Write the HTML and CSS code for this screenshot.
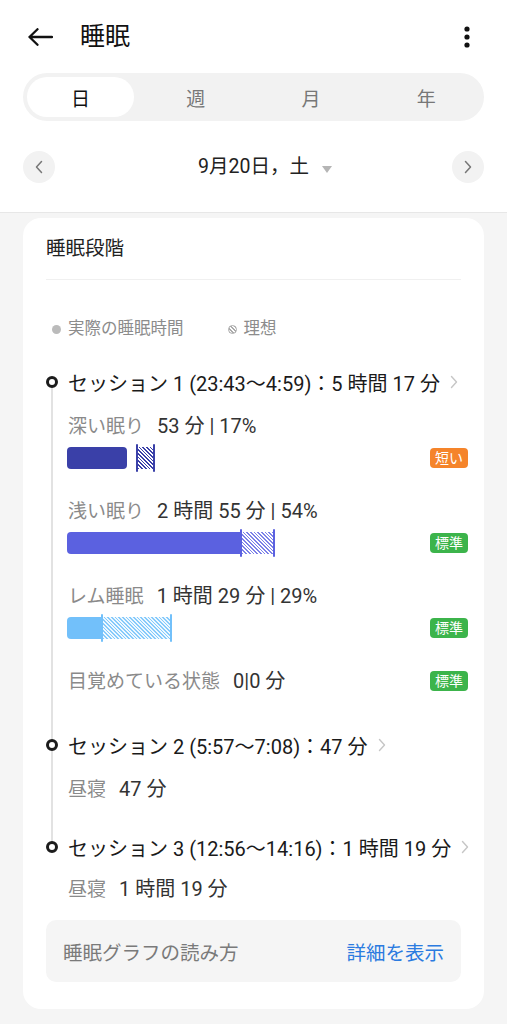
FILE: index.html
```html
<!DOCTYPE html>
<html lang="ja">
<head>
<meta charset="utf-8">
<title>睡眠</title>
<link rel="stylesheet" href="styles.css">
</head>
<body>
<div class="app">
  <header class="top">
    <div class="appbar">
      <svg class="back" width="26" height="18" viewBox="0 0 26 18"><path d="M25 9H2.5M10.5 1.2L2.5 9l8 7.8" fill="none" stroke="#111" stroke-width="2.3" stroke-linecap="round" stroke-linejoin="round"/></svg>
      <h1 class="title">睡眠</h1>
      <svg class="more" width="6" height="22" viewBox="0 0 6 22"><circle cx="3" cy="3" r="2.6" fill="#111"/><circle cx="3" cy="11" r="2.6" fill="#111"/><circle cx="3" cy="19" r="2.6" fill="#111"/></svg>
    </div>
    <div class="seg">
      <div class="seg-item active">日</div>
      <div class="seg-item">週</div>
      <div class="seg-item">月</div>
      <div class="seg-item">年</div>
    </div>
    <div class="datebar">
      <div class="nav"><svg width="8" height="14" viewBox="0 0 8 14"><path d="M6.5 1.5L1.5 7l5 5.5" fill="none" stroke="#777" stroke-width="1.5" stroke-linecap="round" stroke-linejoin="round"/></svg></div>
      <div class="date"><span class="date-text">9月20日，土</span></div>
      <div class="nav"><svg width="8" height="14" viewBox="0 0 8 14"><path d="M1.5 1.5L6.5 7l-5 5.5" fill="none" stroke="#777" stroke-width="1.5" stroke-linecap="round" stroke-linejoin="round"/></svg></div>
    </div>
  </header>

  <main class="content">
    <section class="card">
      <h2 class="card-title">睡眠段階</h2>
      <div class="sep"></div>
      <div class="legend">
        <span class="ldot solid"></span><span class="ltext">実際の睡眠時間</span>
        <span class="ldot hatch"></span><span class="ltext">理想</span>
      </div>

      <div class="timeline">
        <div class="session first">
          <div class="rail"><span class="marker"></span></div>
          <div class="sbody">
            <div class="shead"><span class="stitle">セッション 1 (23:43〜4:59)：5 時間 17 分</span><svg class="chev" width="8" height="14" viewBox="0 0 8 14"><path d="M1.5 1.5L6.5 7l-5 5.5" fill="none" stroke="#c6c6c6" stroke-width="1.4" stroke-linecap="round" stroke-linejoin="round"/></svg></div>

            <div class="stage">
              <div class="slabel"><span class="sname">深い眠り</span><span class="sval">53 分 | 17%</span></div>
              <div class="barrow">
                <div class="bar deep">
                  <span class="solid full" style="width:60px"></span>
                  <span class="gapper" style="width:9px"></span>
                  <span class="tick"></span><span class="hatch" style="width:15px"></span><span class="tick"></span>
                </div>
                <span class="badge short">短い</span>
              </div>
            </div>

            <div class="stage">
              <div class="slabel"><span class="sname">浅い眠り</span><span class="sval">2 時間 55 分 | 54%</span></div>
              <div class="barrow">
                <div class="bar light">
                  <span class="solid" style="width:173px"></span>
                  <span class="tick"></span><span class="hatch" style="width:31px"></span><span class="tick"></span>
                </div>
                <span class="badge ok">標準</span>
              </div>
            </div>

            <div class="stage">
              <div class="slabel"><span class="sname">レム睡眠</span><span class="sval">1 時間 29 分 | 29%</span></div>
              <div class="barrow">
                <div class="bar rem">
                  <span class="solid" style="width:34px"></span>
                  <span class="tick"></span><span class="hatch" style="width:67px"></span><span class="tick"></span>
                </div>
                <span class="badge ok">標準</span>
              </div>
            </div>

            <div class="stage awake">
              <div class="slabel"><span class="sname">目覚めている状態</span><span class="sval">0|0 分</span></div>
              <span class="badge ok">標準</span>
            </div>
          </div>
        </div>

        <div class="session mid">
          <div class="rail"><span class="marker"></span></div>
          <div class="sbody">
            <div class="shead"><span class="stitle">セッション 2 (5:57〜7:08)：47 分</span><svg class="chev" width="8" height="14" viewBox="0 0 8 14"><path d="M1.5 1.5L6.5 7l-5 5.5" fill="none" stroke="#c6c6c6" stroke-width="1.4" stroke-linecap="round" stroke-linejoin="round"/></svg></div>
            <div class="nap"><span class="sname">昼寝</span><span class="sval">47 分</span></div>
          </div>
        </div>

        <div class="session last">
          <div class="rail"><span class="marker"></span></div>
          <div class="sbody">
            <div class="shead"><span class="stitle">セッション 3 (12:56〜14:16)：1 時間 19 分</span><svg class="chev" width="8" height="14" viewBox="0 0 8 14"><path d="M1.5 1.5L6.5 7l-5 5.5" fill="none" stroke="#c6c6c6" stroke-width="1.4" stroke-linecap="round" stroke-linejoin="round"/></svg></div>
            <div class="nap"><span class="sname">昼寝</span><span class="sval">1 時間 19 分</span></div>
          </div>
        </div>
      </div>

      <div class="info">
        <span class="info-text">睡眠グラフの読み方</span>
        <span class="info-link">詳細を表示</span>
      </div>
    </section>
  </main>
</div>
</body>
</html>
```

FILE: styles.css
```css
* { box-sizing: border-box; }
html, body { margin: 0; padding: 0; }
body {
  background: #f5f5f5;
  font-family: Roboto, "Noto Sans CJK JP", sans-serif;
  color: #222;
  width: 507px;
  min-height: 1024px;
}
.top {
  background: #fff;
  padding-bottom: 29px;
  border-bottom: 1px solid #e7e7e7;
}
.appbar {
  height: 73px;
  display: flex;
  align-items: center;
  padding: 0 37px 0 27px;
}
.back { display: block; flex: none; }
.title {
  margin: 0 0 0 27px;
  font-size: 25px;
  font-weight: 400;
  color: #111;
  line-height: 34px;
}
.more { margin-left: auto; display: block; }

.seg {
  margin: 0 23px;
  height: 48px;
  border-radius: 24px;
  background: #f2f2f2;
  display: grid;
  grid-template-columns: repeat(4, 1fr);
}
.seg-item {
  margin: 4px;
  border-radius: 21px;
  display: flex;
  align-items: center;
  justify-content: center;
  font-size: 19px;
  color: #777;
}
.seg-item.active { background: #fff; color: #111; }

.datebar {
  margin-top: 30px;
  height: 32px;
  padding: 0 23px;
  display: flex;
  align-items: center;
  justify-content: space-between;
}
.nav {
  width: 32px;
  height: 32px;
  border-radius: 50%;
  background: #f2f2f2;
  display: flex;
  align-items: center;
  justify-content: center;
}
.nav svg { display: block; }
.date { flex: 1; text-align: center; }
.date-text {
  position: relative;
  font-size: 19.5px;
  color: #222;
  line-height: 32px;
}
.date-text::after {
  content: "";
  position: absolute;
  left: calc(100% + 13px);
  top: 11px;
  border-left: 5.5px solid transparent;
  border-right: 5.5px solid transparent;
  border-top: 7px solid #b5b5b5;
}

.card {
  margin: 5px 23px 0;
  background: #fff;
  border-radius: 18px;
  padding: 17px 23px 27px;
}
.card-title {
  margin: 0;
  font-size: 19.5px;
  font-weight: 400;
  line-height: 28px;
  color: #222;
}
.sep { margin-top: 16px; height: 1px; background: #f0f0f0; }

.legend {
  margin-top: 37px;
  display: flex;
  align-items: center;
  line-height: 24px;
  font-size: 16.5px;
  color: #8c8c8c;
  padding-left: 6px;
}
.ldot {
  width: 9px;
  height: 9px;
  border-radius: 50%;
  margin-right: 7px;
  flex: none;
}
.ldot.solid { background: #bbbbbb; }
.ldot.hatch {
  margin-left: 44px;
  background: repeating-linear-gradient(45deg, #aaaaaa 0 1.3px, #fff 1.3px 2.6px);
  border: 1px solid #aaaaaa;
}

.timeline { margin-top: 27px; }
.session { display: flex; }
.rail {
  width: 12px;
  flex: none;
  background: linear-gradient(#e2e2e2, #e2e2e2) no-repeat;
  background-size: 2px 100%;
  background-position: 5px 0;
}
.session.first .rail { background-position: 5px 14px; }
.session.last .rail { background-size: 2px 14px; }
.marker {
  display: block;
  margin-top: 8px;
  width: 12px;
  height: 12px;
  border-radius: 50%;
  border: 3px solid #1c1c1c;
  background: #fff;
}
.sbody {
  flex: 1;
  margin-left: 10px;
  margin-right: -7px;
}
.session.first .sbody { padding-bottom: 36px; }
.session.mid .sbody { padding-bottom: 30px; }
.shead {
  display: flex;
  align-items: center;
  height: 28px;
}
.stitle {
  font-size: 20px;
  font-weight: 400;
  color: #1a1a1a;
  white-space: nowrap;
}
.chev { margin-left: 10px; flex: none; display: block; }

.slabel, .nap {
  display: flex;
  align-items: baseline;
  height: 28px;
  line-height: 28px;
  font-size: 19px;
  white-space: nowrap;
}
.sname { color: #8a8a8a; margin-right: 13px; }
.sval { color: #333; font-size: 20px; }
.stage { margin-top: 25px; }
.shead + .stage { margin-top: 16px; }
.nap { margin-top: 16px; }
.session.last .nap { margin-top: 14px; }

.barrow {
  margin-top: 4px;
  height: 28px;
  display: flex;
  align-items: center;
  justify-content: space-between;
  margin-left: -1px;
}
.bar { display: flex; align-items: center; height: 28px; }
.bar .solid { height: 22px; border-radius: 4px 0 0 4px; display: block; }
.bar .solid.full { border-radius: 4px; }
.bar .gapper { display: block; height: 22px; }
.bar .tick { width: 2px; height: 28px; display: block; border-radius: 1px; }
.bar .hatch { height: 22px; display: block; }

.bar.deep .solid, .bar.deep .tick { background: #3a40a8; }
.bar.deep .hatch { background: repeating-linear-gradient(45deg, #3a40a8 0 1.2px, #fff 1.2px 2.6px); }
.bar.light .solid, .bar.light .tick { background: #5b61e0; }
.bar.light .hatch { background: repeating-linear-gradient(45deg, #7d82e8 0 1.2px, #fff 1.2px 2.6px); }
.bar.rem .solid, .bar.rem .tick { background: #72c0fa; }
.bar.rem .hatch { background: repeating-linear-gradient(45deg, #86cafb 0 1.2px, #eef8ff 1.2px 2.6px); }

.stage.awake {
  display: flex;
  align-items: center;
  justify-content: space-between;
}
.badge {
  display: inline-block;
  height: 20px;
  line-height: 20px;
  padding: 0 5px;
  border-radius: 4px;
  color: #fff;
  font-size: 14px;
  flex: none;
}
.badge.short { background: #f5842a; }
.badge.ok { background: #3cb44b; }

.info {
  margin-top: 17px;
  height: 62px;
  border-radius: 10px;
  background: #f5f5f5;
  display: flex;
  align-items: center;
  justify-content: space-between;
  padding: 0 17px;
  font-size: 19.5px;
}
.info-text { color: #7a7a7a; }
.info-link { color: #2b7be0; }
```
